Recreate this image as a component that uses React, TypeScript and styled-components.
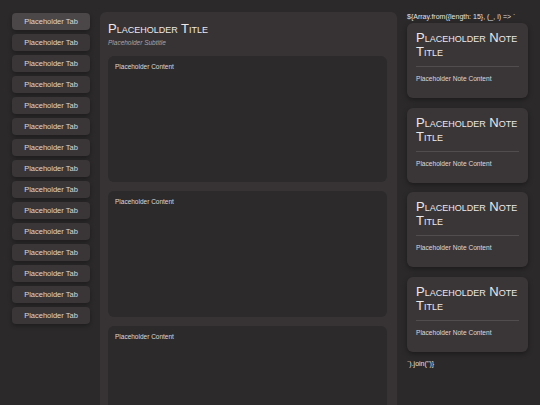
import React from 'react'
import styled, { createGlobalStyle } from 'styled-components'

const GlobalStyle = createGlobalStyle`
  html, body {
    margin: 0;
    padding: 0;
    background: #2b292a;
    height: 100%;
    overflow: hidden;
  }
  body {
    font-family: "Liberation Sans", Arial, sans-serif;
    color: #e6e2e3;
  }
`

const Layout = styled.div`
  display: grid;
  grid-template-columns: 78px 297px 121px;
  column-gap: 10px;
  padding: 12px 0 0 12px;
  align-items: start;
`

const Sidebar = styled.nav`
  display: flex;
  flex-direction: column;
  gap: 4px;
  padding-top: 1px;
`

const Tab = styled.button<{ $active?: boolean }>`
  height: 17px;
  border: none;
  border-radius: 4px;
  background: ${(p) => (p.$active ? '#4b4748' : '#3a3637')};
  color: #dcd8d9;
  font-family: "Liberation Sans", Arial, sans-serif;
  font-size: 7.5px;
  padding: 0;
  box-shadow: 0 2px 4px rgba(0, 0, 0, 0.3);
  cursor: pointer;
`

const Main = styled.main`
  background: #373334;
  border-radius: 6px;
  padding: 9px 10px 8px 8px;
  display: flex;
  flex-direction: column;
  height: 420px;
  box-sizing: border-box;
`

const Title = styled.h1`
  margin: 0;
  font-size: 13px;
  font-weight: normal;
  font-variant: small-caps;
  line-height: 16px;
  color: #ece8e9;
`

const Subtitle = styled.p`
  margin: 2px 0 10px;
  font-size: 6.5px;
  font-style: italic;
  color: #a8a3a5;
`

const ContentList = styled.div`
  display: flex;
  flex-direction: column;
  gap: 9px;
`

const ContentBox = styled.section`
  background: #2c2a2b;
  border-radius: 6px;
  height: 126px;
  padding: 7px;
  box-sizing: border-box;
  font-size: 6.5px;
  color: #dedadb;
  flex-shrink: 0;
`

const Notes = styled.aside`
  display: flex;
  flex-direction: column;
  color: #e6e2e3;
`

const CodeLine = styled.div<{ $end?: boolean }>`
  font-size: 7px;
  line-height: 9px;
  margin: ${(p) => (p.$end ? '0' : '0 0 2px')};
`

const NoteList = styled.div`
  display: flex;
  flex-direction: column;
  gap: 9.5px;
  margin-bottom: 7px;
`

const NoteCard = styled.article`
  background: #3a3637;
  border-radius: 6px;
  padding: 8px 9px 15px;
  box-shadow: 0 2px 5px rgba(0, 0, 0, 0.35);
`

const NoteTitle = styled.h2`
  margin: 0;
  font-size: 13px;
  font-weight: normal;
  font-variant: small-caps;
  line-height: 14px;
  color: #ece8e9;
  padding-bottom: 7px;
  border-bottom: 1px solid #514d4e;
`

const NoteContent = styled.p`
  margin: 8px 0 0;
  font-size: 6.6px;
  line-height: 8px;
  color: #dedadb;
`

const tabs = Array.from({ length: 15 }, (_, i) => i)

export default function App() {
  return (
    <>
      <GlobalStyle />
      <Layout>
        <Sidebar>
          {tabs.map((i) => (
            <Tab key={i} $active={i === 0}>
              Placeholder Tab
            </Tab>
          ))}
        </Sidebar>
        <Main>
          <Title>Placeholder Title</Title>
          <Subtitle>Placeholder Subtitle</Subtitle>
          <ContentList>
            {[0, 1, 2].map((i) => (
              <ContentBox key={i}>Placeholder Content</ContentBox>
            ))}
          </ContentList>
        </Main>
        <Notes>
          <CodeLine>{'${Array.from({length: 15}, (_, i) => `'}</CodeLine>
          <NoteList>
            {[0, 1, 2, 3].map((i) => (
              <NoteCard key={i}>
                <NoteTitle>Placeholder Note Title</NoteTitle>
                <NoteContent>Placeholder Note Content</NoteContent>
              </NoteCard>
            ))}
          </NoteList>
          <CodeLine $end>{"`).join('')}"}</CodeLine>
        </Notes>
      </Layout>
    </>
  )
}
